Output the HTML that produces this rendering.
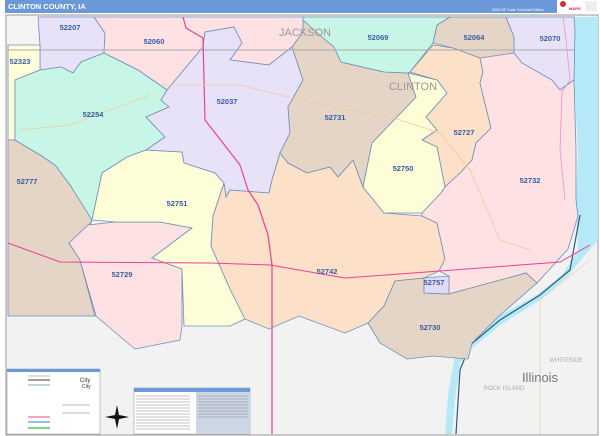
<!DOCTYPE html>
<html><head><meta charset="utf-8"><style>
html,body{margin:0;padding:0;background:#fff;width:600px;height:436px;overflow:hidden}
svg{display:block}
text{font-family:"Liberation Sans",sans-serif}
.z{fill:#3a5ea6;font-size:7.5px;text-anchor:middle;font-weight:bold}
.p{stroke:#6f8fb8;stroke-width:.8}
</style></head><body>
<svg width="600" height="436" viewBox="0 0 600 436" xmlns="http://www.w3.org/2000/svg">
<rect x="0" y="0" width="600" height="436" fill="#fff"/>
<rect x="5" y="0" width="552" height="13" fill="#6b98d8"/>
<text x="8" y="9" fill="#fff" font-size="7.5" font-weight="bold">CLINTON COUNTY, IA</text>
<text x="492" y="11" fill="#fff" font-size="3.5">2026 ZIP Code ColorCast Edition</text>
<rect x="557" y="0" width="42" height="13" fill="#fff"/>
<circle cx="563" cy="4" r="3" fill="#c33"/>
<text x="569" y="10" fill="#d22" font-size="4" font-weight="bold">MAPS</text>
<rect x="585" y="1" width="12" height="10" fill="#eee"/>
<rect x="6" y="15" width="592" height="420" fill="#f2f2f2" stroke="#999" stroke-width="1"/>
<rect x="8" y="17" width="590" height="33" fill="#f4f4f4"/>
<path d="M574,17 L598,17 L598,240 L585,255 L568,276 L540,300 L499,326 L470,350 L460,363 L455,400 L452,434 L445,434 L448,395 L455,355 L470,335 L495,318 L535,296 L562,275 L578,250 L576,200 L578,150 L574,80 Z" fill="#b5e9f7"/>
<path d="M580,215 L570,270 L540,295 L500,320 L470,345 L460,370 L456,434" fill="none" stroke="#2f5d78" stroke-width="1.2"/>
<polygon class="p" fill="#e8e2f8" points="38,17 94,17 105,33 104,53 81,62 73,73 61,67 40,70 40,45 38,17"/>
<polygon class="p" fill="#fdfdd8" points="8,45 40,45 40,70 15,80 15,140 8,140"/>
<polygon class="p" fill="#fde1e3" points="94,17 303,17 303,32 292,47 269,65 230,60 242,43 234,27 205,32 203,47 167,90 138,70 104,53 105,33"/>
<polygon class="p" fill="#c8f6e6" points="15,80 40,70 61,67 73,73 81,62 104,53 138,70 167,90 161,100 169,107 146,117 165,137 146,150 127,157 102,173 92,220 88,230 70,185 55,165 40,155 15,140"/>
<polygon class="p" fill="#e4d5c6" points="8,140 15,140 40,155 55,165 70,185 92,220 85,233 69,243 80,260 95,316 8,316"/>
<polygon class="p" fill="#fde1e3" points="69,243 88,225 115,222 160,222 192,228 152,258 182,269 182,326 180,340 135,349 123,339 96,316 80,260"/>
<polygon class="p" fill="#fdfdd8" points="146,150 182,152 184,163 215,173 224,183 213,216 211,246 230,289 245,319 230,326 184,326 182,269 152,258 192,228 160,222 115,222 92,220 102,173 127,157"/>
<polygon class="p" fill="#e8e2f8" points="205,32 234,27 242,43 230,60 269,65 292,47 303,80 288,107 290,133 280,153 272,180 269,193 230,190 226,197 224,183 215,173 184,163 182,152 146,150 165,137 146,117 169,107 161,100 167,90 203,47"/>
<polygon class="p" fill="#fde0c8" points="224,183 226,197 230,190 269,193 272,180 280,153 288,163 307,173 330,167 338,177 353,160 363,187 384,213 422,216 437,223 445,259 439,271 424,278 395,281 384,306 368,323 345,333 299,316 269,329 245,319 230,289 211,246 213,216"/>
<polygon class="p" fill="#e4d5c6" points="303,20 322,37 334,47 341,62 384,72 408,73 416,97 399,115 372,143 363,187 353,160 338,177 330,167 307,173 288,163 280,153 290,133 288,107 303,80 292,47 303,32"/>
<polygon class="p" fill="#c8f6e6" points="303,17 450,17 437,25 433,43 410,72 408,73 384,72 341,62 334,47 322,37 303,20"/>
<polygon class="p" fill="#e4d5c6" points="450,17 506,17 514,37 514,53 491,62 480,58 453,48 433,43 437,25"/>
<polygon class="p" fill="#e8e2f8" points="506,17 574,17 575,30 574,80 560,90 552,80 522,63 514,53 514,37"/>
<polygon class="p" fill="#fde0c8" points="433,45 453,48 480,58 483,72 480,83 491,128 476,143 472,160 460,173 445,187 437,147 422,140 437,130 426,117 447,93 437,80 410,72"/>
<polygon class="p" fill="#fdfdd8" points="408,73 437,80 447,93 426,117 437,130 422,140 437,147 445,187 441,193 422,213 384,213 363,187 372,143 399,115 416,97"/>
<polygon class="p" fill="#fde1e3" points="480,58 514,53 522,63 552,80 560,90 574,80 576,150 576,200 578,216 568,249 537,283 526,273 449,294 449,276 439,271 445,259 437,223 422,216 422,213 441,193 445,187 460,173 472,160 476,143 491,128 480,83 483,72"/>
<polygon class="p" fill="#e4d5c6" points="395,281 424,278 424,293 449,294 526,273 537,283 499,316 472,343 468,359 433,356 407,359 380,343 368,323 384,306"/>
<polygon class="p" fill="#e0dcf8" points="424,278 449,276 449,294 424,293"/>
<line x1="8" y1="50" x2="574" y2="50" stroke="#aaa" stroke-width="1"/>
<path d="M183,17 L186,28 L203,38 L205,120 L240,165 L248,190 L258,205 L268,235 L272,265 L272,434" fill="none" stroke="#e8409a" stroke-width="1.2"/>
<path d="M8,243 L60,262 L210,263 L270,265 L345,278 L440,271 L560,262 L590,245" fill="none" stroke="#e8409a" stroke-width="1"/>
<path d="M563,17 L566,40 L570,80 L562,92 L560,150 L565,200" fill="none" stroke="#f090c0" stroke-width=".8"/>
<path d="M20,130 L70,125 L150,95 M160,85 L240,85 L300,100 L400,120 L440,133 L470,170 L500,240 L530,250" fill="none" stroke="#f4c89a" stroke-width=".8"/>
<path d="M540,434 L540,300 L590,260" fill="none" stroke="#f4c89a" stroke-width=".7"/>
<text x="305" y="36" fill="#999" font-size="11" text-anchor="middle">JACKSON</text>
<text x="413" y="90" fill="#999" font-size="11" text-anchor="middle">CLINTON</text>
<text x="566" y="362" fill="#aaa" font-size="6" text-anchor="middle">WHITESIDE</text>
<text x="504" y="390" fill="#aaa" font-size="6" text-anchor="middle">ROCK ISLAND</text>
<text x="540" y="382" fill="#777" font-size="13" text-anchor="middle">Illinois</text>
<text class="z" x="70" y="30">52207</text>
<text class="z" x="154" y="44">52060</text>
<text class="z" x="20" y="64">52323</text>
<text class="z" x="378" y="40">52069</text>
<text class="z" x="474" y="40">52064</text>
<text class="z" x="550" y="41">52070</text>
<text class="z" x="227" y="104">52037</text>
<text class="z" x="93" y="117">52254</text>
<text class="z" x="335" y="120">52731</text>
<text class="z" x="464" y="135">52727</text>
<text class="z" x="403" y="171">52750</text>
<text class="z" x="27" y="184">52777</text>
<text class="z" x="530" y="183">52732</text>
<text class="z" x="177" y="206">52751</text>
<text class="z" x="327" y="274">52742</text>
<text class="z" x="122" y="277">52729</text>
<text class="z" x="434" y="285">52757</text>
<text class="z" x="430" y="330">52730</text>
<rect x="7" y="369" width="93" height="65" fill="#fff" stroke="#888" stroke-width=".5"/>
<rect x="7" y="369" width="93" height="3" fill="#6b98d8"/>
<line x1="28" y1="376" x2="50" y2="376" stroke="#bbb"/>
<line x1="28" y1="380" x2="50" y2="380" stroke="#666" stroke-width="1.2"/>
<line x1="28" y1="385" x2="50" y2="385" stroke="#8ab" stroke-width="1"/>
<line x1="28" y1="417" x2="50" y2="417" stroke="#e8409a" stroke-width="1"/>
<line x1="28" y1="422" x2="50" y2="422" stroke="#7ad" stroke-width="1.5"/>
<line x1="28" y1="428" x2="50" y2="428" stroke="#5c5" stroke-width="1.5"/>
<text x="80" y="382" font-size="6" fill="#333">City</text>
<text x="82" y="388" font-size="5" fill="#333">City</text>
<line x1="62" y1="405" x2="90" y2="405" stroke="#777" stroke-width=".5"/>
<line x1="62" y1="413" x2="90" y2="413" stroke="#777" stroke-width=".5"/>
<path d="M117,405 L119,415 L129,417 L119,419 L117,429 L115,419 L105,417 L115,415 Z" fill="#111"/>
<rect x="134" y="388" width="116" height="46" fill="#fff" stroke="#888" stroke-width=".5"/>
<rect x="134" y="388" width="116" height="4" fill="#6b98d8"/>
<rect x="196" y="392" width="54" height="42" fill="#cdd6e4"/>
<g stroke="#888" stroke-width=".6">
<line x1="136" y1="396" x2="190" y2="396"/><line x1="136" y1="399" x2="190" y2="399"/><line x1="136" y1="402" x2="190" y2="402"/><line x1="136" y1="405" x2="190" y2="405"/><line x1="136" y1="408" x2="190" y2="408"/><line x1="136" y1="411" x2="190" y2="411"/><line x1="136" y1="414" x2="190" y2="414"/><line x1="136" y1="417" x2="190" y2="417"/><line x1="136" y1="420" x2="190" y2="420"/><line x1="136" y1="423" x2="190" y2="423"/><line x1="136" y1="426" x2="190" y2="426"/><line x1="136" y1="429" x2="190" y2="429"/>
<line x1="198" y1="396" x2="248" y2="396"/><line x1="198" y1="399" x2="248" y2="399"/><line x1="198" y1="402" x2="248" y2="402"/><line x1="198" y1="405" x2="248" y2="405"/><line x1="198" y1="408" x2="248" y2="408"/><line x1="198" y1="411" x2="248" y2="411"/><line x1="198" y1="414" x2="248" y2="414"/><line x1="198" y1="417" x2="248" y2="417"/>
</g>
</svg>
</body></html>
